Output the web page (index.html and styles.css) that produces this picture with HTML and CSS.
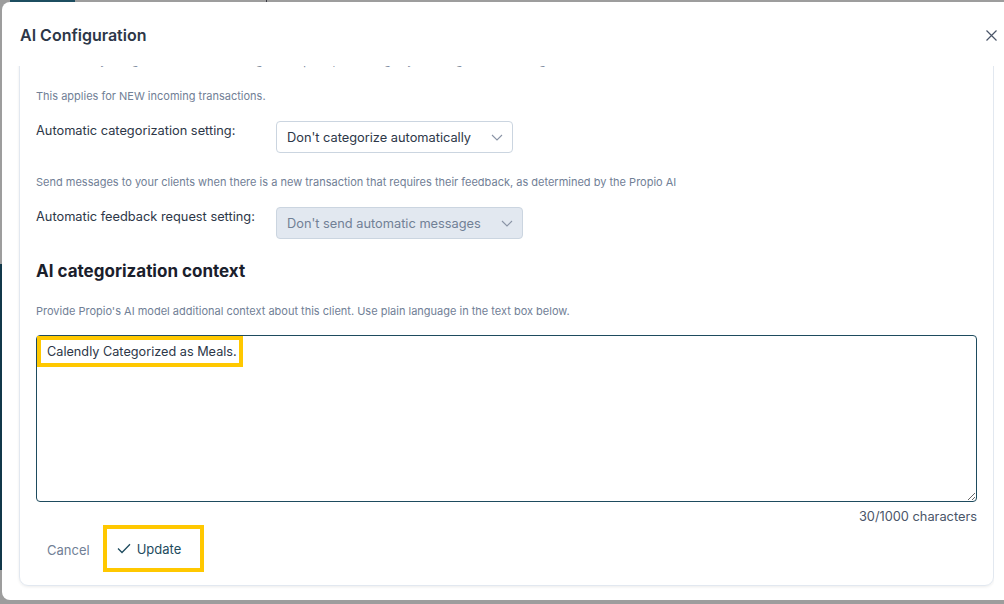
FILE: index.html
```html
<!DOCTYPE html>
<html lang="en">
<head>
<meta charset="utf-8">
<title>AI Configuration</title>
<link rel="stylesheet" href="styles.css">
</head>
<body>
<div class="modal">
  <div class="modal-header">
    <h2 class="modal-title">AI Configuration</h2>
    <button class="close-btn" aria-label="Close">
      <svg width="11" height="11" viewBox="0 0 11 11"><path d="M0.5 0.5L10.5 10.5M10.5 0.5L0.5 10.5" stroke="#4a5568" stroke-width="1.2" fill="none"/></svg>
    </button>
  </div>
  <div class="modal-body">
    <div class="card">
      <p class="hint clipped">Automatically categorize transactions using the Propio AI, according to your categorization settings.</p>
      <p class="hint first">This applies for NEW incoming transactions.</p>
      <div class="setting-row">
        <span class="setting-label">Automatic categorization setting:</span>
        <div class="select">
          <span>Don't categorize automatically</span>
          <svg class="chev" width="12" height="7" viewBox="0 0 12 7"><path d="M1 1L6 6L11 1" stroke="#8a94a6" stroke-width="1.1" fill="none"/></svg>
        </div>
      </div>
      <p class="hint send">Send messages to your clients when there is a new transaction that requires their feedback, as determined by the Propio AI</p>
      <div class="setting-row">
        <span class="setting-label">Automatic feedback request setting:</span>
        <div class="select disabled">
          <span>Don't send automatic messages</span>
          <svg class="chev" width="12" height="7" viewBox="0 0 12 7"><path d="M1 1L6 6L11 1" stroke="#8a94a6" stroke-width="1.1" fill="none"/></svg>
        </div>
      </div>
      <h3 class="section-title">AI categorization context</h3>
      <p class="hint provide">Provide Propio's AI model additional context about this client. Use plain language in the text box below.</p>
      <div class="textarea-wrap">
        <textarea class="context-input">Calendly Categorized as Meals.</textarea>
        <div class="annot"></div>
      </div>
      <div class="counter">30/1000 characters</div>
      <div class="actions">
        <button class="btn-cancel">Cancel</button>
        <button class="btn-update">
          <svg width="14" height="11" viewBox="0 0 14 11"><path d="M1 5.5L5 9.5L13 1.2" stroke="#1e4b5e" stroke-width="1.3" fill="none"/></svg>
          <span>Update</span>
        </button>
      </div>
    </div>
  </div>
</div>
</body>
</html>
```

FILE: styles.css
```css
html, body {
  margin: 0;
  padding: 0;
  height: 100%;
  overflow: hidden;
}
body {
  font-family: Inter, "Noto Sans", sans-serif;
  background:
    linear-gradient(#11384a, #11384a) 0 264px / 3px 306px no-repeat,
    linear-gradient(#1c4d60, #1c4d60) 10px 0 / 65px 3px no-repeat,
    linear-gradient(#3a3a44, #3a3a44) 266px 0 / 1px 3px no-repeat,
    #9d9d9d;
}
.modal {
  margin: 2px 0 0 2px;
  width: 1010px;
  height: 598px;
  background: #fff;
  border-radius: 8px;
  display: flex;
  flex-direction: column;
}
.modal-header {
  height: 64px;
  flex: none;
  display: flex;
  align-items: center;
  justify-content: space-between;
  padding: 0 7px 0 18px;
  width: 977px;
}
.modal-title {
  margin: 0;
  font-size: 16px;
  font-weight: 600;
  color: #2d3748;
  padding-top: 2px;
}
.close-btn {
  border: 0;
  background: none;
  padding: 0;
  width: 11px;
  height: 11px;
  display: flex;
  margin-top: 2px;
}
.modal-body {
  flex: 1;
  overflow: hidden;
  padding: 0 0 15px 17px;
  width: 975px;
}
.card {
  margin-top: -23px;
  border: 1px solid #e2e8f0;
  border-radius: 0 0 9px 9px;
  box-shadow: 0 1px 3px rgba(0, 0, 0, 0.08);
  padding: 9px 16px 13px 16px;
}
.hint {
  margin: 0;
  font-size: 11px;
  line-height: 16px;
  color: #718096;
}
.hint.first { margin-top: 19px; }
.hint.send { margin-top: 21px; }
.hint.provide { margin-top: 20px; }
.setting-row {
  display: flex;
  align-items: flex-start;
  margin-top: 17px;
}
.hint.first + .setting-row { margin-top: 17px; }
.setting-label {
  width: 240px;
  flex: none;
  font-size: 12.8px;
  line-height: 19px;
  color: #2d3748;
}
.select {
  display: inline-flex;
  align-items: center;
  gap: 20px;
  height: 30px;
  padding: 0 9px 0 10px;
  border: 1px solid #cbd5e0;
  border-radius: 4px;
  font-size: 12.8px;
  color: #2d3748;
  background: #fff;
}
.select.disabled {
  background: #e2e8f0;
  color: #718096;
  border-color: #cbd5e0;
}
.section-title {
  margin: 20px 0 0;
  font-size: 17px;
  line-height: 24px;
  font-weight: 700;
  color: #1a202c;
}
.textarea-wrap {
  position: relative;
  margin-top: 16px;
}
.context-input {
  display: block;
  width: 100%;
  box-sizing: border-box;
  height: 167px;
  border: 1px solid #1e4b5e;
  border-radius: 4px;
  padding: 8px 10px;
  font-family: Inter, "Noto Sans", sans-serif;
  font-size: 12.7px;
  line-height: 16px;
  color: #2d3748;
  resize: vertical;
  outline: none;
}
.annot {
  position: absolute;
  left: 1px;
  top: 1px;
  width: 198px;
  height: 23px;
  border: 4px solid #ffc800;
  pointer-events: none;
}
.counter {
  margin-top: 7px;
  text-align: right;
  font-size: 12.8px;
  line-height: 16px;
  color: #4a5568;
}
.actions {
  display: flex;
  align-items: center;
  gap: 2px;
  margin-top: 0;
}
.btn-cancel {
  border: 0;
  background: none;
  font-family: Inter, "Noto Sans", sans-serif;
  font-size: 13px;
  color: #718096;
  padding: 0 11px;
  height: 32px;
  margin-top: 3px;
}
.btn-update {
  display: flex;
  align-items: center;
  gap: 6px;
  border: 4px solid #ffc800;
  background: #fff;
  height: 47px;
  box-sizing: border-box;
  padding: 0 19px 0 10px;
  font-family: Inter, "Noto Sans", sans-serif;
  font-size: 13px;
  color: #1e4b5e;
}
```
